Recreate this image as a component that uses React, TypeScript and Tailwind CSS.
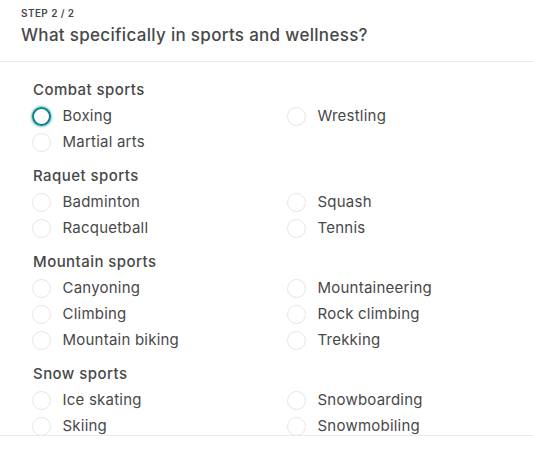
import React from "react";

type Section = { title: string; items: string[] };

const sections: Section[] = [
  { title: "Combat sports", items: ["Boxing", "Wrestling", "Martial arts"] },
  { title: "Raquet sports", items: ["Badminton", "Squash", "Racquetball", "Tennis"] },
  {
    title: "Mountain sports",
    items: ["Canyoning", "Mountaineering", "Climbing", "Rock climbing", "Mountain biking", "Trekking"],
  },
  { title: "Snow sports", items: ["Ice skating", "Snowboarding", "Skiing", "Snowmobiling"] },
];

function Radio({ label, focused }: { label: string; focused?: boolean }) {
  return (
    <label className="flex h-[26px] items-center">
      <span
        className={
          focused
            ? "box-border h-[19px] w-[19px] rounded-full border-2 border-[#008489] shadow-[0_0_2px_1px_rgba(0,132,137,0.5)]"
            : "box-border h-[19px] w-[19px] rounded-full border border-[#e6e6e6]"
        }
      />
      <span className="ml-[11.5px] text-[15px] tracking-[0.015em] text-[#484848]">{label}</span>
    </label>
  );
}

export default function App() {
  return (
    <div
      className="flex h-[449px] w-[533px] flex-col overflow-hidden bg-white text-[#484848]"
      style={{ fontFamily: "Inter, 'Noto Sans', sans-serif" }}
    >
      <div className="h-[62px] shrink-0 border-b border-[#ebebeb] px-[21px] pt-[6px]">
        <div className="text-[10px] font-semibold leading-[14px] tracking-[0.04em]">STEP 2 / 2</div>
        <div className="mt-[3px] text-[17px] font-medium leading-[24px] tracking-[0.018em]">
          What specifically in sports and wellness?
        </div>
      </div>
      <div className="flex-1 overflow-hidden px-[32px] pt-[18px]">
        {sections.map((s, si) => (
          <div key={s.title} className={si > 0 ? "mt-[11px]" : ""}>
            <div className="mb-[3px] h-[20px] pl-px text-[15px] font-medium leading-[20px] tracking-[0.03em]">
              {s.title}
            </div>
            <div className="grid grid-cols-[255px_1fr]">
              {s.items.map((it) => (
                <Radio key={it} label={it} focused={it === "Boxing"} />
              ))}
            </div>
          </div>
        ))}
      </div>
      <div className="h-[14px] shrink-0 border-t border-[#ebebeb] bg-white" />
    </div>
  );
}
